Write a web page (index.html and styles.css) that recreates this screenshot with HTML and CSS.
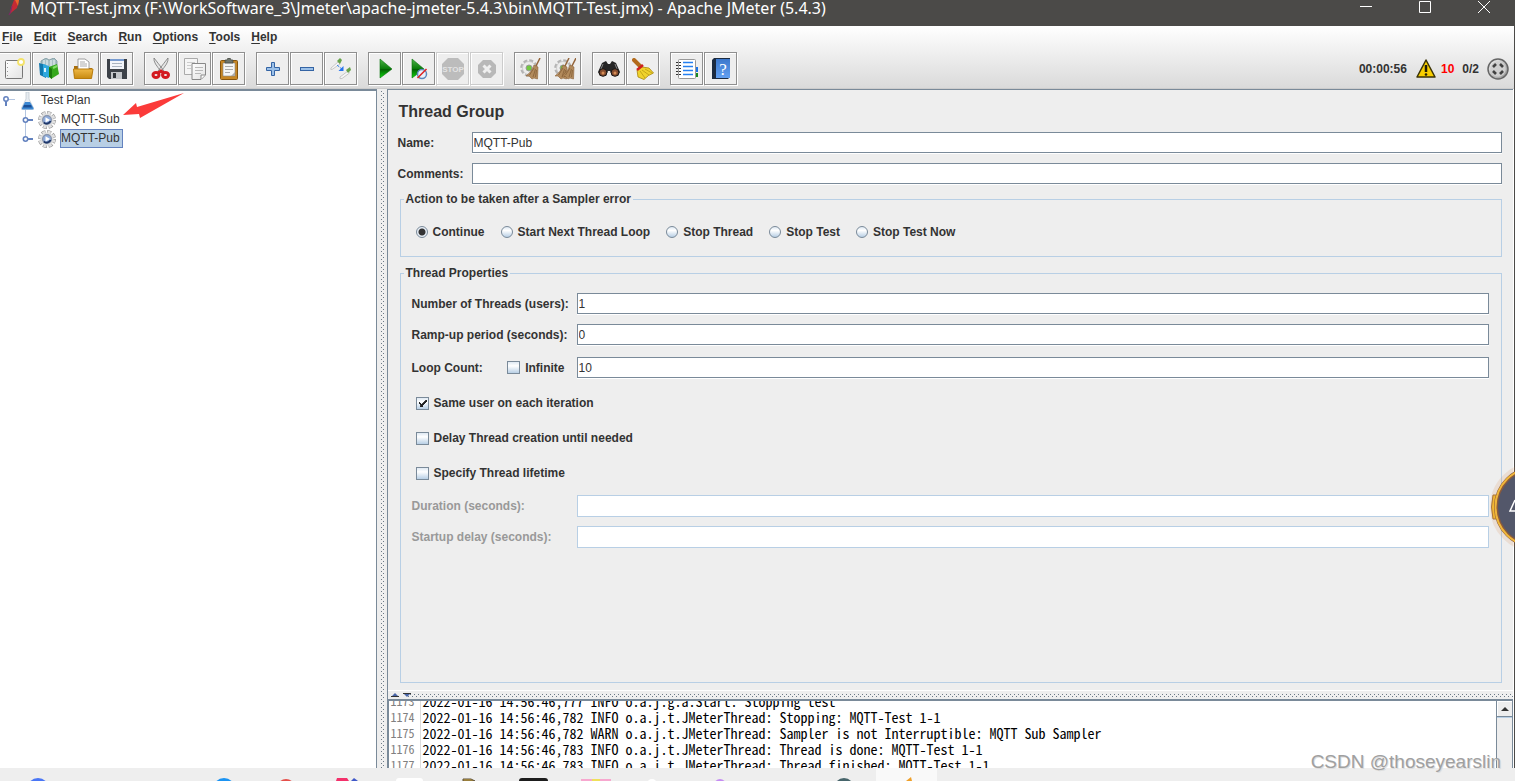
FILE: index.html
```html
<!DOCTYPE html>
<html lang="en">
<head>
<meta charset="utf-8">
<title>MQTT-Test.jmx - Apache JMeter (5.4.3)</title>
<link rel="stylesheet" href="styles.css">
</head>
<body>
<svg class="defs" aria-hidden="true">
  <defs>
    <linearGradient id="green" x1="0" y1="0" x2="0" y2="1"><stop offset="0" stop-color="#4fb34a"/><stop offset=".5" stop-color="#0b7d0b"/><stop offset=".55" stop-color="#046004"/><stop offset="1" stop-color="#0fe00f"/></linearGradient>
    <linearGradient id="folder" x1="0" y1="0" x2="0" y2="1"><stop offset="0" stop-color="#efb947"/><stop offset="1" stop-color="#c88a10"/></linearGradient>
    <linearGradient id="page" x1="0" y1="0" x2="1" y2="1"><stop offset="0" stop-color="#ffffff"/><stop offset="1" stop-color="#e2e2e2"/></linearGradient>
    <linearGradient id="steel" x1="0" y1="0" x2="1" y2="1"><stop offset="0" stop-color="#fafafa"/><stop offset="1" stop-color="#8c8c8c"/></linearGradient>
    <linearGradient id="book" x1="0" y1="0" x2="0" y2="1"><stop offset="0" stop-color="#3c78cc"/><stop offset="1" stop-color="#62a0f2"/></linearGradient>
    <g id="gear">
      <circle cx="9" cy="9" r="7.300" fill="none" stroke="#999" stroke-width="3.400" stroke-dasharray="4 1.734"/>
      <circle cx="9" cy="9" r="7" fill="none" stroke="#e2e2e2" stroke-width="2.800" stroke-dasharray="2.800 2.698" stroke-dashoffset="-.6"/>
      <circle cx="9" cy="9" r="6.600" fill="#dedede"/>
      <circle cx="9" cy="9" r="4.400" fill="#8facdc" stroke="#8794ab" stroke-width="1.200"/>
      <path d="M6 11.500A4 4 0 0 0 12.500 10" fill="none" stroke="#1e3668" stroke-width="1.800"/>
      <path d="M7.500 6.200 12 9 7.500 11.500z" fill="#fff"/>
    </g>
    <g id="knob">
      <path d="M5.500 5H11" stroke="#6382bf" stroke-width="2"/>
      <circle cx="3.500" cy="5" r="2.200" fill="#fff" stroke="#6382bf" stroke-width="1.500"/>
    </g>
    <g id="plaingear">
      <circle cx="9" cy="10" r="7" fill="none" stroke="#b4b4b4" stroke-width="3.500" stroke-dasharray="3.700 1.800"/>
      <circle cx="9" cy="10" r="6.500" fill="#ededed" stroke="#c8c8c8" stroke-width=".8"/>
      <circle cx="9" cy="10" r="3" fill="#72c841" stroke="#999"/>
    </g>
    <g id="broom">
      <path d="M20 0 16 8" stroke="#94643a" stroke-width="1.500"/>
      <path d="M14 7 18 9 17.500 21 14 20 12 21 9 18 6 18Q12 14 14 7z" fill="#b28a5c" stroke="#8b6239" stroke-width=".6"/>
      <path d="M14 10 9.500 17M15.500 11 13 19M16.500 12 15.500 19" stroke="#75502c" stroke-width=".6"/>
    </g>
  </defs>
</svg>

<header class="titlebar">
  <svg class="feather" width="14" height="18" viewBox="0 0 14 18"><path d="M7 0H12L10 8 5 12 3 14 4 8z" fill="#c42a34"/><path d="M8 0H12L11 6z" fill="#e8662b"/><path d="M5 6 4 11 2 15" fill="none" stroke="#84246c"/></svg>
  <h1 class="caption">MQTT-Test.jmx (F:\WorkSoftware_3\Jmeter\apache-jmeter-5.4.3\bin\MQTT-Test.jmx) - Apache JMeter (5.4.3)</h1>
  <div class="window-buttons">
    <button aria-label="Minimize"><svg width="14" height="14" viewBox="0 0 14 14"><path d="M1 6.500H13"/></svg></button>
    <button aria-label="Maximize"><svg width="14" height="14" viewBox="0 0 14 14"><path d="M1.500 1.500H12.500V12.500H1.500z"/></svg></button>
    <button aria-label="Close"><svg width="14" height="14" viewBox="0 0 14 14"><path d="M1 1 13 13M13 1 1 13"/></svg></button>
  </div>
</header>

<div class="window">
<div class="chrome">
  <nav class="menu">
    <a href="#"><u>F</u>ile</a><a href="#"><u>E</u>dit</a><a href="#"><u>S</u>earch</a><a href="#"><u>R</u>un</a><a href="#"><u>O</u>ptions</a><a href="#"><u>T</u>ools</a><a href="#"><u>H</u>elp</a>
  </nav>
  <div class="toolbar">
    <div class="tools">
      <button class="tool" aria-label="New"><svg viewBox="0 0 22 22"><rect x="1.500" y="2.500" width="17" height="18" rx="1" fill="url(#page)" stroke="#777"/><path d="M3.500 5V19" stroke="#999" stroke-dasharray="1 3"/><circle cx="17" cy="4" r="3" fill="#fff" stroke="#f4e36a" stroke-width="1.800"/></svg></button>
      <button class="tool" aria-label="Templates"><svg viewBox="0 0 22 22"><path d="M3 3 8 0 11 2 16 0 19 3V12H3z" fill="#a9c0c6" stroke="#78959c" stroke-width=".8"/><path d="M6 2V8M9 2V8M13 2V8M16 2V8" stroke="#eef5f6"/><path d="M1 5 8 7V20L2 17z" fill="#1277ad"/><path d="M5 6 11 8V20L5 18z" fill="#2ea8de"/><path d="M7 10V14" stroke="#d7f2ff" stroke-width="2"/><path d="M11 9 19 6 21 16 13 21z" fill="#36a81d"/><path d="M11 9 14 11 14 21 11 19z" fill="#1c7b0d"/><path d="M15 10 19 8" stroke="#83df6a" stroke-width="2"/></svg></button>
      <button class="tool" aria-label="Open"><svg viewBox="0 0 22 22"><path d="M2 8H8L9 10H20V18H2z" fill="#a96e0c"/><path d="M6 1H13L17 4V13H6z" fill="#fff" stroke="#888" stroke-width=".8"/><path d="M8 4H13M8 6H15M8 8H15" stroke="#aaa"/><path d="M1.500 11H21L19.500 20.500H2.500z" fill="url(#folder)" stroke="#b77b0c"/></svg></button>
      <button class="tool" aria-label="Save"><svg viewBox="0 0 22 22"><path d="M1 1H21V21H3L1 19z" fill="#3c4148"/><rect x="4" y="1" width="14" height="10" fill="#f2f5fa"/><rect x="4" y="1" width="14" height="2" fill="#779bd0"/><path d="M6 5.500H16M6 8.500H16" stroke="#aab4c0"/><rect x="5" y="14" width="11" height="7" fill="#c3c6ca"/><rect x="7" y="15" width="3" height="5" fill="#30353b"/></svg></button>
      <span class="gap"></span>
      <button class="tool" aria-label="Cut"><svg viewBox="0 0 22 22"><path d="M4 0Q3 5 12 14L14 13Q8 5 4 0zM18 0Q19 5 10 14L8 13Q14 5 18 0z" fill="#e5e5e5" stroke="#777" stroke-width=".8"/><g fill="none" stroke="#d31a20" stroke-width="3"><ellipse cx="6" cy="17" rx="3" ry="2.500"/><ellipse cx="15.500" cy="17" rx="3" ry="2.500"/><path d="M8 15 11 13 14 15"/></g></svg></button>
      <button class="tool" aria-label="Copy"><svg viewBox="0 0 22 22"><path d="M.5.500H13.500V16.500H.5z" fill="#f5f5f5" stroke="#aaa"/><path d="M3 4.500H11M3 7.500H7M3 10.500H7" stroke="#ccc"/><path d="M8 5.500H21.500V17L17 21.500H8z" fill="url(#page)" stroke="#888"/><path d="M11 9.500H19M11 12.500H19M11 15.500H17" stroke="#b9b9b9"/><path d="M21 17H17V21" fill="#fff" stroke="#888"/></svg></button>
      <button class="tool" aria-label="Paste"><svg viewBox="0 0 22 22"><rect x="2.500" y="2.500" width="17" height="19" rx="1" fill="#c78624" stroke="#84540e"/><path d="M5 5H17V18H5z" fill="#f5f5f5" stroke="#888" stroke-width=".6"/><path d="M7 8.500H15M7 11.500H15M7 14.500H12" stroke="#aaa"/><path d="M7 5V2H9L10 0H12L13 2H15V5z" fill="#6f756c" stroke="#3f443c" stroke-width=".7"/><path d="M13 18 17 14V18z" fill="#aaa"/></svg></button>
      <span class="gap"></span>
      <button class="tool" aria-label="Expand all"><svg viewBox="0 0 22 22"><path d="M9.500 4.500H12.500V9.500H17.500V12.500H12.500V17.500H9.500V12.500H4.500V9.500H9.500z" fill="#9bc0e8" stroke="#3464a4"/></svg></button>
      <button class="tool" aria-label="Collapse all"><svg viewBox="0 0 22 22"><rect x="4.500" y="9.500" width="13" height="3" fill="#9bc0e8" stroke="#3464a4"/></svg></button>
      <button class="tool" aria-label="Toggle"><svg viewBox="0 0 22 22"><path d="M8 4 1 10Q0 12 2 11.500L10 6z" fill="#f7f7f7" stroke="#bbb" stroke-width=".8"/><path d="M7 3 10 0 12 2 10 6z" fill="#67a34a"/><path d="M18 13 10 19Q9 21.500 12 20.500L19.500 15z" fill="#f7f7f7" stroke="#bbb" stroke-width=".8"/><path d="M16 12 20 9 21 12 18 15z" fill="#67a34a"/><path d="M7 7 13 12" stroke="#3383ef" stroke-dasharray="3 1"/><path d="M13.500 8V13H8.500z" fill="#2674ee"/></svg></button>
      <span class="gap"></span>
      <button class="tool" aria-label="Start"><svg viewBox="0 0 22 22"><path d="M6 1 18 11 6 20z" fill="url(#green)" stroke="#08720a" stroke-width=".6"/></svg></button>
      <button class="tool" aria-label="Start no pauses"><svg viewBox="0 0 22 22"><path d="M4 1 16 11 4 20z" fill="url(#green)" stroke="#08720a" stroke-width=".6"/><circle cx="14" cy="16" r="4.500" fill="#e8f1fa" stroke="#5d88bd" stroke-width="1.500"/><path d="M9.500 20 18.500 11" stroke="#dc2525" stroke-width="1.600"/></svg></button>
      <button class="tool" aria-label="Stop" disabled><svg viewBox="0 0 22 22"><path d="M6 0H16L22 6V16L16 22H6L0 16V6z" fill="#bcbcbc"/><text class="stop-text" x="11" y="14" text-anchor="middle">STOP</text></svg></button>
      <button class="tool" aria-label="Shutdown" disabled><svg viewBox="0 0 22 22"><path d="M7 2H15L20 7V15L15 20H7L2 15V7z" fill="#b8b8b8"/><path d="M7.500 7.500 14.500 14.500M14.500 7.500 7.500 14.500" stroke="#efefef" stroke-width="3"/></svg></button>
      <span class="gap"></span>
      <button class="tool" aria-label="Clear"><svg viewBox="0 0 22 22"><use href="#plaingear"/><use href="#broom"/></svg></button>
      <button class="tool" aria-label="Clear all"><svg viewBox="0 0 22 22"><use href="#plaingear"/><use href="#broom" x="-5"/><use href="#broom" x="2"/></svg></button>
      <span class="gap"></span>
      <button class="tool" aria-label="Search"><svg viewBox="0 0 22 22"><path d="M4 5 8 3 10 6H12L14 3 18 5 22 14 20 18H14L12 13H10L8 18H2L0 14z" fill="#262626"/><path d="M5 6 3 11M17 6 19 11" stroke="#888"/><circle cx="5" cy="14.500" r="3.800" fill="#864d2e" stroke="#171717"/><circle cx="17" cy="14.500" r="3.800" fill="#864d2e" stroke="#171717"/><circle cx="5" cy="15" r="1.500" fill="#d68d55"/><circle cx="17" cy="15" r="1.500" fill="#d68d55"/></svg></button>
      <button class="tool" aria-label="Reset search"><svg viewBox="0 0 22 22"><path d="M2 2 8 8" stroke="#b36b1c" stroke-width="4" stroke-linecap="round"/><path d="M10 9 17 10 21.500 15Q16 17 12 21.500L6 19 5 12z" fill="#f0d32c" stroke="#a8860c" stroke-width=".8"/><path d="M10 12 17 17M8 13 13 20M13 11 20 15" stroke="#b99a14" stroke-width=".8"/><path d="M5 12 11 7" stroke="#cf1f1f" stroke-width="2.500"/></svg></button>
      <span class="gap"></span>
      <button class="tool" aria-label="Function helper"><svg viewBox="0 0 22 22"><rect x="18" y="9" width="4" height="5" fill="#1b74e8"/><rect x="18" y="15" width="4" height="4" fill="#178a20"/><rect x="2.500" y="1.500" width="17" height="19" rx="1" fill="#fff" stroke="#999"/><path d="M0 4.500H5M0 7.500H5M0 10.500H5M0 13.500H5M0 16.500H5" stroke="#333" stroke-dasharray="2 1"/><path d="M7 4.500H17M7 8.500H17M7 12.500H17M7 16.500H17" stroke="#2680f0" stroke-width="1.300"/></svg></button>
      <button class="tool" aria-label="Help"><svg viewBox="0 0 22 22"><path d="M2 2 4 0H20V19L18 21H2z" fill="#1c2b40"/><rect x="6" y="1" width="14" height="19" fill="url(#book)"/><text class="help-text" x="13" y="17" text-anchor="middle">?</text></svg></button>
    </div>
    <div class="status">
      <span class="clock">00:00:56</span>
      <svg width="20" height="19" viewBox="0 0 20 19"><path d="M10 1 19 18H1z" fill="#f8ce00" stroke="#3a3205" stroke-width="1.500" stroke-linejoin="round"/><path d="M10 6V13" stroke="#221e08" stroke-width="2.500"/><circle cx="10" cy="15.500" r="1.300" fill="#221e08"/></svg>
      <span class="errors">10</span>
      <span class="threads">0/2</span>
      <svg width="22" height="22" viewBox="0 0 22 22"><circle cx="11" cy="11" r="10" fill="url(#steel)" stroke="#666" stroke-width="1.500"/><circle cx="11" cy="11" r="7.800" fill="#cfcfcf"/><path d="M6 9 9 6M13 6 16 9M16 13 13 16M9 16 6 13" stroke="#424242" stroke-width="2.600"/></svg>
    </div>
  </div>
</div>

<main class="workspace">
  <aside class="tree">
    <ul>
      <li class="row root"><svg class="handle" width="14" height="12" viewBox="0 0 14 12"><path d="M6 4.500H13" stroke="#b3c5e0"/><path d="M4 5V11" stroke="#6382bf" stroke-width="2"/><circle cx="4" cy="4" r="2.200" fill="#fff" stroke="#6382bf" stroke-width="1.500"/></svg><svg width="14" height="18" viewBox="0 0 14 18"><path d="M5 0H8V7L12.500 16Q13 18 11 18H2Q0 18 .5 16L5 7z" fill="#e8edf2" stroke="#c2cad2" stroke-width=".8"/><path d="M4 10H9L12.500 16Q13 17.500 11 17.500H2Q.5 17.500 1 16z" fill="#3d88d2"/><path d="M3 13H10L11 15.500H2z" fill="#1b4f96"/></svg><span class="label">Test Plan</span></li>
      <li class="row child"><svg class="handle" width="12" height="19" viewBox="0 -5 12 19"><path d="M3.500-5V14" stroke="#b3c5e0"/><use href="#knob"/></svg><svg width="18" height="18" viewBox="0 0 18 18"><use href="#gear"/></svg><span class="label">MQTT-Sub</span></li>
      <li class="row child"><svg class="handle" width="12" height="19" viewBox="0 -5 12 19"><path d="M3.500-5V4" stroke="#b3c5e0"/><use href="#knob"/></svg><svg width="18" height="18" viewBox="0 0 18 18"><use href="#gear"/></svg><span class="label selected">MQTT-Pub</span></li>
    </ul>
    <svg class="pointer" width="64" height="28" viewBox="0 0 64 28"><path d="M62 1 18 26 17 22 1 23 14 11 15 15z" fill="#fb3b3a"/></svg>
  </aside>
  <div class="splitter vertical"></div>
  <section class="content">
    <form class="editor">
      <h2>Thread Group</h2>
      <div class="field"><label for="name">Name:</label><input id="name" type="text" value="MQTT-Pub"></div>
      <div class="field"><label for="comments">Comments:</label><input id="comments" type="text"></div>
      <fieldset class="action">
        <legend>Action to be taken after a Sampler error</legend>
        <div class="options">
          <label><input type="radio" name="action" checked>Continue</label>
          <label><input type="radio" name="action">Start Next Thread Loop</label>
          <label><input type="radio" name="action">Stop Thread</label>
          <label><input type="radio" name="action">Stop Test</label>
          <label><input type="radio" name="action">Stop Test Now</label>
        </div>
      </fieldset>
      <fieldset class="properties">
        <legend>Thread Properties</legend>
        <div class="props">
          <div class="prop"><label for="users">Number of Threads (users):</label><input id="users" type="text" value="1"></div>
          <div class="prop"><label for="ramp">Ramp-up period (seconds):</label><input id="ramp" type="text" value="0"></div>
          <div class="prop loop"><span class="pair"><label for="loops">Loop Count:</label><label class="check"><input type="checkbox">Infinite</label></span><input id="loops" type="text" value="10"></div>
          <label class="check line"><input type="checkbox" checked>Same user on each iteration</label>
          <label class="check line"><input type="checkbox">Delay Thread creation until needed</label>
          <label class="check line"><input type="checkbox">Specify Thread lifetime</label>
          <div class="prop off"><label for="duration">Duration (seconds):</label><input id="duration" type="text" disabled></div>
          <div class="prop off"><label for="delay">Startup delay (seconds):</label><input id="delay" type="text" disabled></div>
        </div>
      </fieldset>
    </form>
    <div class="splitter horizontal"><svg width="22" height="6" viewBox="0 0 22 6"><path d="M1 5H9L5 1z" fill="#4a66a8"/><path d="M13 1H21L17 5z" fill="#4a66a8"/><path d="M1 4.500H9M13 1.500H21" stroke="#333"/></svg></div>
    <div class="log">
      <ol class="lines">
        <li><span class="no">1173</span><span class="msg">2022-01-16 14:56:46,777 INFO o.a.j.g.a.Start: Stopping test</span></li>
        <li><span class="no">1174</span><span class="msg">2022-01-16 14:56:46,782 INFO o.a.j.t.JMeterThread: Stopping: MQTT-Test 1-1</span></li>
        <li><span class="no">1175</span><span class="msg">2022-01-16 14:56:46,782 WARN o.a.j.t.JMeterThread: Sampler is not Interruptible: MQTT Sub Sampler</span></li>
        <li><span class="no">1176</span><span class="msg">2022-01-16 14:56:46,783 INFO o.a.j.t.JMeterThread: Thread is done: MQTT-Test 1-1</span></li>
        <li><span class="no">1177</span><span class="msg">2022-01-16 14:56:46,783 INFO o.a.j.t.JMeterThread: Thread finished: MQTT-Test 1-1</span></li>
      </ol>
      <div class="scrollbar"><button type="button" aria-label="Scroll up"><svg width="10" height="6" viewBox="0 0 10 6"><path d="M1 5H9L5 1z" fill="#333"/></svg></button></div>
    </div>
  </section>
</main>
</div>

<footer class="taskbar">
  <svg width="940" height="13" viewBox="0 0 940 13">
    <rect x="876" y="0" width="61" height="13" fill="#f9f9f9"/>
    <circle cx="38" cy="21" r="11" fill="#4a76f5"/>
    <circle cx="224" cy="21" r="11" fill="#1b93f2"/>
    <circle cx="286" cy="20" r="9" fill="#e5504b"/>
    <path d="M337 10H347L349 13H336z" fill="#f3316b"/><path d="M354 10 358 13H351z" fill="#4058c8"/>
    <rect x="396" y="10" width="27" height="6" rx="3" fill="#fff"/>
    <path d="M463 11H471L475 13H463z" fill="#d7ad3f" stroke="#5d503a"/>
    <rect x="519" y="10" width="29" height="6" rx="3" fill="#1d1d1d"/>
    <path d="M581 11H611V13H581z" fill="#f7a8cf"/><path d="M592 11H600V13H592z" fill="#efe05a"/>
    <circle cx="652" cy="16" r="5" fill="#fff"/>
    <circle cx="720" cy="17" r="6" fill="#c58df2"/>
    <circle cx="844" cy="20" r="10" fill="#47656b"/>
    <path d="M906 13 911 9 912 13z" fill="#efa02a"/>
  </svg>
</footer>

<div class="watermark">CSDN @thoseyearslin</div>
<svg class="gauge" width="30" height="84" viewBox="0 0 30 84" aria-hidden="true">
  <circle cx="50" cy="42" r="43" fill="none" stroke="#d9803c" stroke-opacity=".15" stroke-width="4"/>
  <path d="M8 30H13V54H8Q5 42 8 30z" fill="#f2b632" stroke="#a8743c"/>
  <circle cx="50" cy="42" r="39" fill="#53576a" stroke="#8b5a3c" stroke-width="4"/>
  <circle cx="50" cy="42" r="39.500" fill="none" stroke="#f0b73a" stroke-width="2"/>
  <path d="M30 35 25 46H30" fill="none" stroke="#fff" stroke-width="1.500"/>
</svg>
</body>
</html>
```
FILE: styles.css
```css
* { box-sizing: border-box; }
body {
  margin: 0;
  height: 100vh;
  display: flex;
  flex-direction: column;
  position: relative;
  overflow: hidden;
  background: #eeeeee;
  color: #333333;
  font: bold 12px/14px "Liberation Sans", Arial, sans-serif;
}
button { padding: 0; border: 0; background: none; }
input { margin: 0; font: inherit; color: inherit; }
ul, ol { list-style: none; margin: 0; padding: 0; }
.defs { position: absolute; width: 0; height: 0; }

.titlebar {
  display: flex;
  align-items: flex-start;
  height: 26px;
  padding: 0 24px 0 7px;
  background: #4b4a48;
  color: #ffffff;
}
.feather { flex: none; }
.caption {
  flex: 1;
  margin: 0;
  padding-left: 9px;
  font: 16px/16px "Noto Sans", "Noto Sans CJK SC", sans-serif;
  white-space: nowrap;
}
.window-buttons { display: flex; gap: 45px; }
.window-buttons button { width: 14px; height: 14px; }
.window-buttons svg { display: block; fill: none; stroke: #ffffff; }

.window {
  flex: 1;
  min-height: 0;
  display: flex;
  flex-direction: column;
  border-right: 1px solid #4b4a48;
}
.chrome {
  background: linear-gradient(#ffffff, #dadada);
  border-bottom: 1px solid #cccccc;
}
.menu { display: flex; gap: 11px; padding: 4px 2px; }
.menu a { color: inherit; text-decoration: none; }
.menu u { text-underline-offset: 2px; }
.toolbar {
  display: flex;
  justify-content: space-between;
  align-items: center;
  padding: 4px 5px 3px 0;
}
.tools { display: flex; margin-left: -2px; }
.tool {
  width: 33px;
  height: 33px;
  margin-right: 1px;
  display: grid;
  place-items: center;
  border: 1px solid #8f8f8f;
  box-shadow: inset 1px 1px #ffffff, 1px 1px #ffffff;
  background: #eeeeee;
}
.tool:disabled { border-color: #cccccc; }
.tool svg { width: 22px; height: 22px; }
.stop-text { font: bold 8px "Liberation Sans", Arial, sans-serif; fill: #e3e3e3; }
.help-text { font: 17px "Liberation Serif", serif; fill: #ffffff; }
.gap { width: 10px; }
.status { display: flex; align-items: center; gap: 8px; }
.clock { margin-right: 1px; }
.errors { margin-left: -3px; color: #ff0000; }

.workspace { flex: 1; min-height: 0; display: flex; }
.tree {
  position: relative;
  width: calc(25% - 2px);
  flex: none;
  background: #ffffff;
  border-top: 2px solid #7a8a99;
  border-right: 1px solid #7a8a99;
}
.row { display: flex; align-items: center; height: 19px; font-weight: normal; }
.root { padding-left: 2px; }
.root .handle { margin-right: 5px; }
.root .label { margin-left: 3px; }
.child { padding-left: 22px; }
.child .handle { margin-right: 4px; }
.label { padding: 0 2px; border: 1px solid transparent; line-height: 17px; }
.child .label { padding: 0 2px 0 0; margin-left: 4px; }
.selected { background: #b8cfe5; border-color: #6382bf; }
.pointer { position: absolute; left: 122px; top: 1px; }

.splitter {
  background-color: #f0f0f0;
  background-image:
    conic-gradient(from 270deg at 1px 1px, #6b7986 90deg, transparent 0),
    conic-gradient(from 270deg at 1px 1px, #6b7986 90deg, transparent 0);
  background-size: 4px 4px;
  background-position: 0 0, 2px 2px;
  background-origin: content-box;
  background-clip: content-box;
}
.vertical { width: 10px; flex: none; padding: 2px 2px 0 4px; }
.horizontal { position: relative; height: 9px; padding: 3px 0 2px 18px; border-top: 1px solid #ffffff; }
.horizontal svg { position: absolute; left: 2px; top: 1px; }

.content {
  flex: 1;
  min-width: 0;
  display: flex;
  flex-direction: column;
  border-left: 1px solid #7a8a99;
  border-right: 1px solid #ffffff;
}
.editor {
  flex: 1;
  min-height: 0;
  display: flex;
  flex-direction: column;
  padding: 12px 11px 7px 10px;
  border-top: 1px solid #7a8a99;
}
h2 { margin: 0 0 10px 1px; font-size: 16px; line-height: 20px; }
.field { display: flex; align-items: center; margin-bottom: 10px; }
.field label { width: 74px; }
input[type="text"] {
  flex: 1;
  min-width: 0;
  height: 21px;
  padding: 0 1px;
  border: 1px solid #7a8a99;
  border-radius: 0;
  background: #ffffff;
  box-shadow: 0 1px #ffffff;
  font-weight: normal;
}
fieldset {
  min-width: 0;
  margin: 0 0 0 2px;
  padding: 0;
  border: 1px solid #b8cfe5;
}
legend { margin-left: 3px; padding: 0 2px; }
.action { margin-top: -2px; }
.options { display: flex; align-items: center; gap: 16px; height: 50px; padding: 2px 14px 0 15px; }
.options label { display: flex; align-items: center; gap: 5px; }
input[type="radio"], input[type="checkbox"] {
  appearance: none;
  width: 13px;
  height: 13px;
  border: 1px solid #7a8a99;
  background: linear-gradient(#dfe9f3, #ffffff 35%, #b8cfe5);
}
input[type="radio"] { width: 12px; height: 12px; border-radius: 50%; }
input[type="radio"]:checked { background: radial-gradient(circle, #333333 3px, #e8eff7 4px); }
input[type="checkbox"]:checked {
  background: linear-gradient(45deg, transparent 30%, #222222 31%, #222222 50%, transparent 51%) 2px 3px / 4px 6px no-repeat,
    linear-gradient(135deg, transparent 42%, #222222 43%, #222222 60%, transparent 61%) 3px 2px / 7px 7px no-repeat,
    linear-gradient(#dfe9f3, #ffffff 35%, #b8cfe5);
}
.properties { flex: 1; margin-top: 9px; }
.props { padding: 13px 12px 0 11px; }
.prop { display: flex; align-items: center; margin-bottom: 10px; }
.prop > label, .pair { width: 165px; flex: none; }
.pair { display: flex; justify-content: space-between; padding-right: 12px; }
.loop { margin: 12px 0 18px; }
.check { display: flex; align-items: center; gap: 5px; }
.line { width: fit-content; margin: 0 0 21px 4px; }
.off { margin-bottom: 9px; color: #999999; }
.line + .off { margin-top: -6px; }
.off input[type="text"] { height: 22px; border-color: #b8cfe5; box-shadow: none; }

.log {
  display: flex;
  height: 69px;
  border-top: 2px solid #7a8a99;
  border-left: 1px solid #7a8a99;
  background: #ffffff;
  overflow: hidden;
}
.lines {
  flex: 1;
  min-width: 0;
  display: flex;
  flex-direction: column;
  justify-content: flex-end;
  margin-bottom: -5px;
  color: #000000;
  font: 14px/16px "Noto Sans Mono CJK SC", "Liberation Mono", monospace;
  white-space: pre;
}
.lines li { display: flex; height: 16px; }
.no { width: 32px; padding-left: 2px; border-right: 1px solid #dddddd; color: #808080; font-size: 12px; }
.msg { padding-left: 2px; }
.scrollbar { width: 17px; border-left: 1px solid #7a8a99; border-right: 1px solid #7a8a99; background: #eeeeee; }
.scrollbar button { display: grid; place-items: center; width: 100%; height: 16px; border-bottom: 1px solid #7a8a99; box-shadow: inset 1px 1px #ffffff, 0 1px #b8cfe5; }

.taskbar { flex: none; height: 13px; overflow: hidden; background: #eeeeee; }
.taskbar svg { display: block; }
.watermark {
  position: absolute;
  right: 14px;
  bottom: 8px;
  font: 19px/22px "Liberation Sans", Arial, sans-serif;
  color: #a0a0a0;
  text-shadow: 1px 1px #dddddd;
}
.gauge { position: absolute; right: 0; top: 465px; }
```
